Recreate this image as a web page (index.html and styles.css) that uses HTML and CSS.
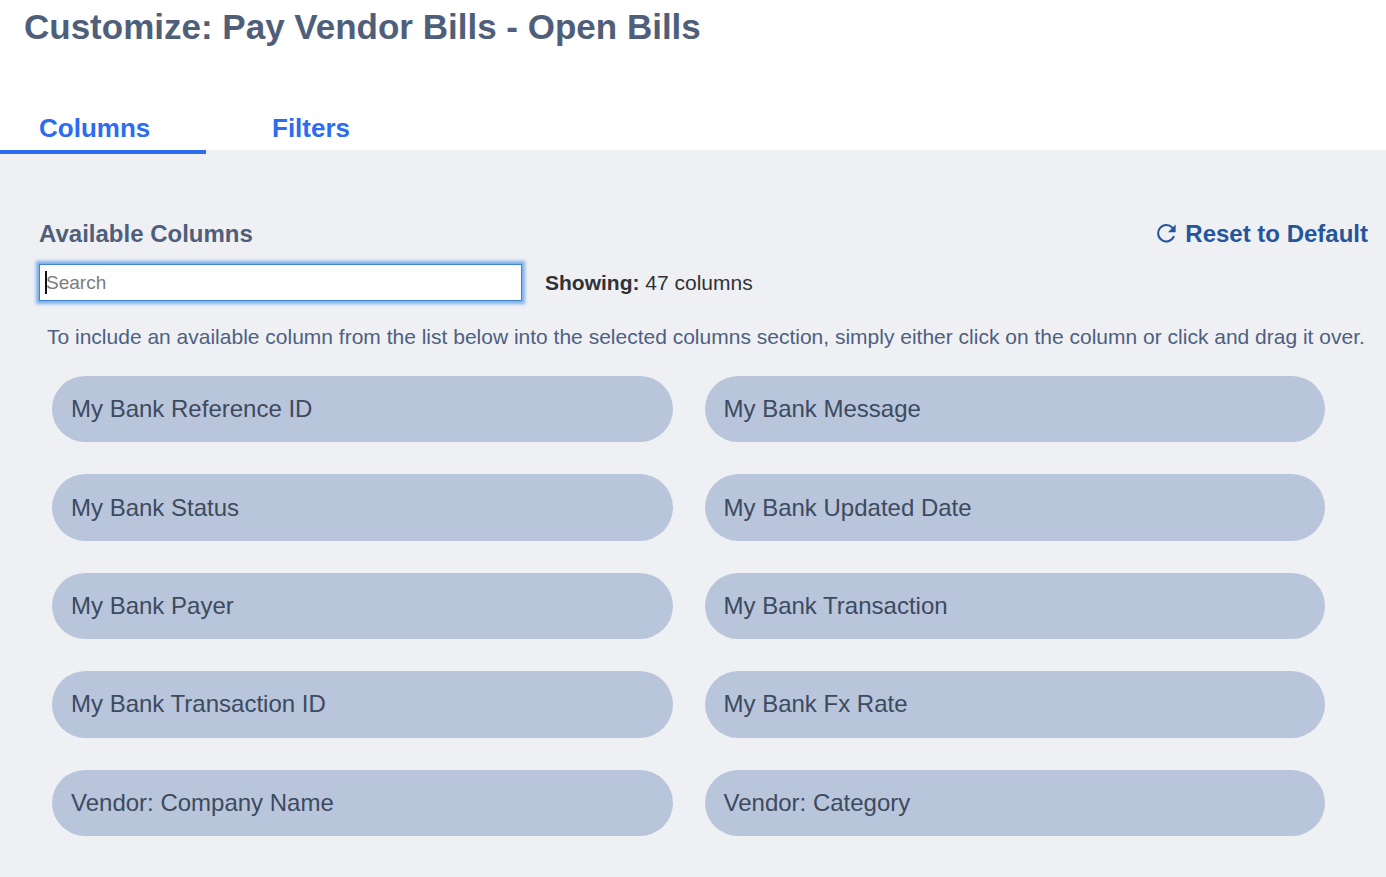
FILE: index.html
```html
<!DOCTYPE html>
<html lang="en">
<head>
<meta charset="utf-8">
<meta name="viewport" content="width=device-width, initial-scale=1">
<title>Customize: Pay Vendor Bills - Open Bills</title>
<link rel="stylesheet" href="styles.css">
</head>
<body>
<h1 class="page-title">Customize: Pay Vendor Bills - Open Bills</h1>
<nav class="tabs" aria-label="Customize">
  <a class="tab tab-active" href="#columns" aria-current="page">Columns</a>
  <a class="tab" href="#filters">Filters</a>
</nav>
<main class="panel" id="columns">
  <div class="panel-head">
    <h2 class="panel-title"><label for="search">Available Columns</label></h2>
    <button class="reset" type="button">
      <svg class="reset-icon" viewBox="0 0 19 19" aria-hidden="true"><path fill="none" stroke="currentColor" stroke-width="2" d="M17 12.2A8.2 8.2 0 1 1 15.4 3.7L17 5.6"/><path fill="currentColor" d="M18.6 0.6V8.2H11z"/></svg>
      <span>Reset to Default</span>
    </button>
  </div>
  <div class="search-row">
    <div class="search-box">
      <input class="search" id="search" type="text" placeholder="Search" autofocus>
      <span class="caret" aria-hidden="true"></span>
    </div>
    <p class="count"><strong>Showing:</strong> 47 columns</p>
  </div>
  <p class="hint">To include an available column from the list below into the selected columns section, simply either click on the column or click and drag it over.</p>
  <div class="column-grid">
    <button class="pill" type="button">My Bank Reference ID</button>
    <button class="pill" type="button">My Bank Message</button>
    <button class="pill" type="button">My Bank Status</button>
    <button class="pill" type="button">My Bank Updated Date</button>
    <button class="pill" type="button">My Bank Payer</button>
    <button class="pill" type="button">My Bank Transaction</button>
    <button class="pill" type="button">My Bank Transaction ID</button>
    <button class="pill" type="button">My Bank Fx Rate</button>
    <button class="pill" type="button">Vendor: Company Name</button>
    <button class="pill" type="button">Vendor: Category</button>
  </div>
</main>
</body>
</html>
```
FILE: styles.css
```css
* {
  box-sizing: border-box;
}

body {
  margin: 0;
  min-height: 100vh;
  display: flex;
  flex-direction: column;
  background: #fff;
  color: #2f3237;
  font-family: "Liberation Sans", Arial, sans-serif;
}

h1, h2, p {
  margin: 0;
}

button, input {
  font-family: inherit;
}

.page-title {
  padding: 6px 24px 0;
  color: #4f5f7a;
  font-size: 35px;
  line-height: 42px;
}

.tabs {
  z-index: 1;
  display: flex;
  gap: 27px;
  margin-top: 58px;
}

.tab {
  width: 206px;
  height: 48px;
  padding-left: 39px;
  border-bottom: 4px solid transparent;
  color: #2d6bf0;
  font-size: 26px;
  font-weight: bold;
  line-height: 44px;
  text-decoration: none;
}

.tab-active {
  border-color: #2d6bf0;
}

.panel {
  flex: 1;
  display: flex;
  flex-direction: column;
  margin-top: -4px;
  padding: 68px 18px 41px 39px;
  background: #eef0f4;
}

.panel-head {
  display: flex;
  justify-content: space-between;
  align-items: center;
  height: 32px;
}

.panel-title {
  color: #4f5f7a;
  font-size: 24px;
  line-height: 32px;
}

.reset {
  display: flex;
  align-items: center;
  gap: 9px;
  padding: 0;
  border: 0;
  background: none;
  color: #25559a;
  font-size: 24px;
  font-weight: bold;
  line-height: 32px;
  cursor: pointer;
}

.reset-icon {
  width: 19px;
  height: 19px;
  margin-bottom: 2px;
}

.search-row {
  display: flex;
  align-items: center;
  gap: 23px;
  margin-top: 14px;
}

.search-box {
  position: relative;
  display: flex;
}

.search {
  width: 483px;
  height: 37px;
  padding: 0 6px;
  border: 1px solid #4285cf;
  border-radius: 0;
  outline: none;
  background: #fff;
  color: #111;
  caret-color: transparent;
  font-size: 19px;
}

.search:focus {
  box-shadow: 0 0 3px 3px #7fb0ea;
}

.search::placeholder {
  color: #7c7c7c;
}

.caret {
  position: absolute;
  top: 7px;
  left: 6px;
  width: 2px;
  height: 23px;
  background: #111;
  pointer-events: none;
}

.count {
  font-size: 21px;
  line-height: 28px;
}

.hint {
  margin: 22px 0 0 8px;
  color: #4f5f7f;
  font-size: 21px;
  line-height: 28px;
}

.column-grid {
  flex: 1;
  display: grid;
  grid-template-columns: 1fr 1fr;
  grid-auto-rows: 1fr;
  gap: 32px;
  margin: 25px 43px 0 13px;
}

.pill {
  min-height: 64px;
  padding: 0 19px;
  border: 0;
  border-radius: 34px;
  background: #b8c5db;
  color: #3d4a60;
  font-size: 24px;
  text-align: left;
  cursor: pointer;
}
```
